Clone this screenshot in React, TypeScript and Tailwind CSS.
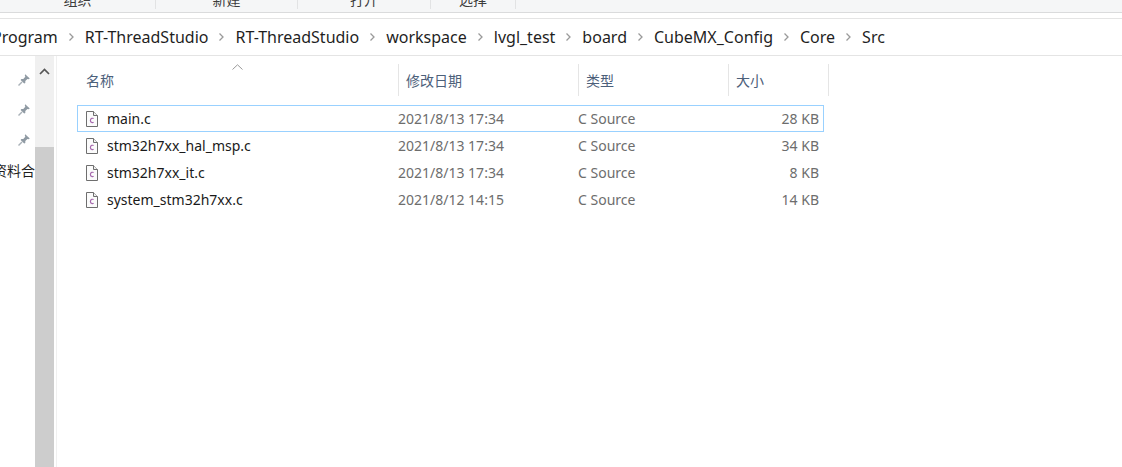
const font = { fontFamily: '"Noto Sans", "Noto Sans CJK SC", sans-serif' };

const crumbs = ["Program", "RT-ThreadStudio", "RT-ThreadStudio", "workspace", "lvgl_test", "board", "CubeMX_Config", "Core", "Src"];

const files = [
  ["main.c", "2021/8/13 17:34", "28 KB"],
  ["stm32h7xx_hal_msp.c", "2021/8/13 17:34", "34 KB"],
  ["stm32h7xx_it.c", "2021/8/13 17:34", "8 KB"],
  ["system_stm32h7xx.c", "2021/8/12 14:15", "14 KB"],
];

function Pin() {
  return (
    <svg width="14" height="14" viewBox="0 0 14 14" className="block">
      <path d="M8.2 1.2 L12.8 5.4 L11.6 6.2 L10.4 5.9 L8.3 8 L8.3 10 L7.2 10.6 L3.6 7 L4.4 6 L6.3 5.9 L8.3 3.8 L7.8 2.5 Z" fill="#8f9aa3" />
      <path d="M5 9 L1.5 12.6" stroke="#a9b1b8" strokeWidth="1.4" />
    </svg>
  );
}

function FileIcon() {
  return (
    <svg width="16" height="16" viewBox="0 0 16 16" className="block shrink-0">
      <path d="M2.5 0.5 H9.5 L13.5 4.5 V15.5 H2.5 Z" fill="#fbfbfb" stroke="#6e6e6e" />
      <path d="M9.5 0.5 V4.5 H13.5" fill="#f0f0f0" stroke="#6e6e6e" />
      <path d="M9.6 7.6 C8.8 7 6.4 7 6.4 9.4 C6.4 11.8 8.8 11.8 9.6 11.2" fill="none" stroke="#a668ad" strokeWidth="1.2" />
    </svg>
  );
}

function Chevron() {
  return (
    <svg width="7" height="10" viewBox="0 0 7 10" className="block">
      <path d="M1.5 1.5 L5 5 L1.5 8.5" fill="none" stroke="#9a9a9a" strokeWidth="1.3" />
    </svg>
  );
}

function Head({ w, label, arrow }: { w: string; label: string; arrow?: boolean }) {
  return (
    <div className={`${w} relative h-[32px] flex items-center pl-[7px] border-r border-[#e5e5e5] text-[14px] text-[#4c607a]`}>
      {arrow && (
        <svg width="11" height="6" viewBox="0 0 11 6" className="absolute left-[153px] top-[-0px]">
          <path d="M0.5 5.5 L5.5 0.8 L10.5 5.5" fill="none" stroke="#9a9a9a" />
        </svg>
      )}
      {label}
    </div>
  );
}

export default function App() {
  return (
    <div style={font} className="w-[1122px] h-[467px] overflow-hidden bg-white flex flex-col">
      <div className="h-[13px] shrink-0 bg-[#f5f6f7] border-b border-[#dadbdc] flex overflow-hidden text-[14px] text-[#3c3c3c]">
        {[["w-[156px]", "组织"], ["w-[142px]", "新建"], ["w-[133px]", "打开"], ["w-[85px]", "选择"]].map(([w, t]) => (
          <div key={t} className={`${w} h-[9px] border-r border-[#e2e3e4] flex justify-center items-end leading-[20px]`}>
            <span className="translate-y-[0px] pt-0 leading-[18px]">{t}</span>
          </div>
        ))}
      </div>
      <div className="h-[5px] shrink-0" />
      <div className="h-[38px] shrink-0 border-y border-[#e4e4e4] flex items-center -ml-[8px] gap-[10px] text-[16px] text-[#1f1f1f]">
        {crumbs.map((c, i) => (
          <div key={i} className="flex items-center gap-[10px] whitespace-nowrap">
            <span>{c}</span>
            {i < crumbs.length - 1 && <Chevron />}
          </div>
        ))}
      </div>
      <div className="flex-1 flex min-h-0">
        <div className="w-[35px] shrink-0 flex flex-col items-end pt-[17px] pr-[4px] relative">
          <div className="flex flex-col gap-[16px]">
            <Pin />
            <Pin />
            <Pin />
          </div>
          <span className="absolute right-0 top-[104px] w-[35px] overflow-hidden whitespace-nowrap flex justify-end text-[14px] text-[#1f1f1f]">资料合</span>
        </div>
        <div className="w-[19px] shrink-0 bg-[#f0f0f0] flex flex-col pl-0">
          <div className="h-[91px] flex justify-center pt-[12px]">
            <svg width="11" height="7" viewBox="0 0 11 7" className="block">
              <path d="M1 6 L5.5 1.5 L10 6" fill="none" stroke="#555" strokeWidth="1.7" />
            </svg>
          </div>
          <div className="flex-1 bg-[#cdcdcd]" />
        </div>
        <div className="w-[3px] shrink-0 border-r border-[#f0f0f0]" />
        <div className="flex-1 pt-[8px] pl-[15px]">
          <div className="flex">
            <div className="w-[7px]" />
            <Head w="w-[320px]" label="名称" arrow />
            <Head w="w-[180px]" label="修改日期" />
            <Head w="w-[150px]" label="类型" />
            <Head w="w-[100px]" label="大小" />
          </div>
          <div className="mt-[9px] ml-[5px] w-[747px] flex flex-col text-[14px]">
            {files.map(([n, d, s], i) => (
              <div key={n} className={`h-[27px] flex items-center border ${i === 0 ? "border-[#99d1ff]" : "border-transparent"}`}>
                <div className="w-[320px] flex items-center pl-[6px] gap-[7px] text-[#1a1a1a]">
                  <FileIcon />
                  <span className="whitespace-nowrap">{n}</span>
                </div>
                <div className="w-[180px] text-[#6d6d6d] whitespace-nowrap">{d}</div>
                <div className="w-[150px] text-[#6d6d6d] whitespace-nowrap">C Source</div>
                <div className="flex-1 text-right pr-[4px] text-[#6d6d6d] whitespace-nowrap">{s}</div>
              </div>
            ))}
          </div>
        </div>
      </div>
    </div>
  );
}
